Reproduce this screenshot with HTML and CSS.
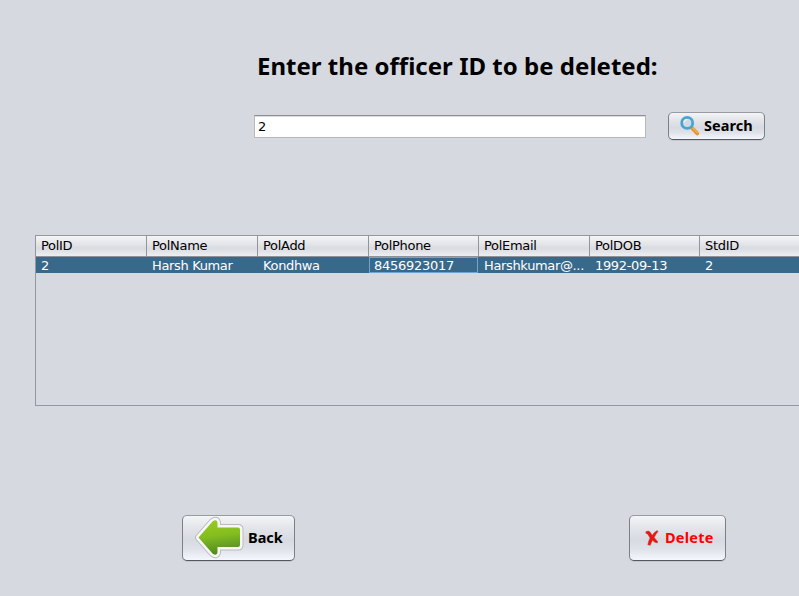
FILE: index.html
```
<!DOCTYPE html>
<html lang="en">
<head>
<meta charset="utf-8">
<title>Delete officer</title>
<link rel="stylesheet" href="styles.css">
</head>
<body>
<main class="panel">
  <h1 class="title">Enter the officer ID to be deleted:</h1>
  <form class="search">
    <input class="field" type="text" value="2" aria-label="Officer ID">
    <button class="btn btn-search" type="button">
      <svg width="20" height="20" viewBox="0 0 20 20">
        <path d="M12.300 12.300 17.300 17.500" stroke="#e3922f" stroke-width="3.800" stroke-linecap="round"/>
        <path d="M12.800 12 17.600 17" stroke="#f3b04f" stroke-width="1.300" stroke-linecap="round"/>
        <circle cx="7.200" cy="6.900" r="5.500" fill="#cfdae2" stroke="#48a5d2" stroke-width="2.800"/>
        <path d="M4 6.600A3.500 3.500 0 0 1 7.500 3.600" fill="none" stroke="#eef3f6" stroke-width="1.200"/>
      </svg>
      <span class="search-label">Search</span>
    </button>
  </form>
  <div class="grid">
    <div class="row head">
      <span>PolID</span><span>PolName</span><span>PolAdd</span><span>PolPhone</span><span>PolEmail</span><span>PolDOB</span><span>StdID</span>
    </div>
    <div class="row selected">
      <span>2</span><span>Harsh Kumar</span><span>Kondhwa</span><span class="focused">8456923017</span><span>Harshkumar@...</span><span>1992-09-13</span><span>2</span>
    </div>
  </div>
  <div class="actions">
    <button class="btn btn-back" type="button">
      <svg width="50" height="42" viewBox="0 0 50 42">
        <defs>
          <linearGradient id="leaf" x1="0" y1="0" x2="0.15" y2="1">
            <stop offset="0" stop-color="#98cd20"/><stop offset="0.5" stop-color="#84bd20"/><stop offset="1" stop-color="#528b25"/>
          </linearGradient>
          <path id="arrow" d="M4.500 20.500 18.500 4.500Q22.500 1.500 23.500 5.500V10.500H44Q46 10.500 46 12.500V28Q46 30 44 30H23.500V35.500Q22.500 39.500 18.500 36.500Z"/>
        </defs>
        <g stroke-linejoin="round">
          <use href="#arrow" fill="#b9bbbe" stroke="#b9bbbe" stroke-width="7"/>
          <use href="#arrow" fill="#f6f7f6" stroke="#f6f7f6" stroke-width="5"/>
          <use href="#arrow" fill="url(#leaf)"/>
        </g>
      </svg>
      <span class="back-label">Back</span>
    </button>
    <button class="btn btn-delete" type="button">
      <svg width="14" height="16" viewBox="0 0 14 16">
        <path d="M.8 1.800Q3.500 .2 5 2L7.300 5.300Q9 2 12.200 .6L13 1.600Q10.800 4 9.200 7.600L12.800 11.800 12.200 13Q9.700 12.700 7.600 10.300Q6 13 5.300 15.300L2.800 14.800Q3.200 11.500 5 8L2.800 4.300Q2.200 3.400 1 3.500Z" fill="#ee1410" stroke="#ae4440" stroke-width=".5"/>
      </svg>
      <span class="delete-label">Delete</span>
    </button>
  </div>
</main>
</body>
</html>
```
FILE: styles.css
```
* { box-sizing: border-box; }
body {
  margin: 0;
  background: #d6d9df;
  color: #000;
  font: 13px/16px "DejaVu Sans", sans-serif;
}
.panel { height: 596px; padding-top: 49px; overflow: hidden; }
.title {
  margin: 0 0 0 257px;
  height: 63px;
  font: bold 24px/34px "Noto Sans", sans-serif;
  letter-spacing: 0.02px;
  white-space: nowrap;
}
.search { display: flex; align-items: flex-start; margin-left: 254px; }
.field {
  width: 392px;
  height: 23px;
  margin: 3px 22px 0 0;
  padding: 0 3px;
  border: 1px solid #b6b8bd;
  border-top: 1px solid #8d8e93;
  box-shadow: inset 0 1px 0 #dcdde0;
  background: #fff;
  font: 13px "DejaVu Sans", sans-serif;
  outline: none;
}
.btn {
  display: flex;
  align-items: center;
  padding: 0;
  border: 1px solid #8b8e95;
  border-color: #989ba1 #7b7f86 #55585e;
  border-radius: 5px;
  background: linear-gradient(#f4f5f7 0%, #e4e6ea 25%, #d7dae0 55%, #dfe2e9 75%, #f4f7fe 100%);
  box-shadow: 0 1px 0 #c3c6cd;
  color: #000;
  font: bold 14.5px/20px "Noto Sans", sans-serif;
}
.btn svg { flex: none; overflow: visible; }
.btn span { padding-bottom: 2px; }
.btn-search { width: 97px; height: 28px; padding-left: 11px; gap: 4px; }
.search-label { letter-spacing: 0.05px; }
.grid {
  margin: 95px 0 0 35px;
  width: 784px;
  height: 171px;
  border: 1px solid #9297a1;
}
.row {
  display: grid;
  grid-template-columns: 111px 111px 111px 110px 111px 110px 119px;
}
.row span { padding-left: 5px; white-space: nowrap; overflow: hidden; }
.head {
  height: 21px;
  border-bottom: 1px solid #8e929b;
  background: linear-gradient(#f5f5f7, #dfe1e5 50%, #d8dbe0 60%, #eceef1);
  line-height: 20px;
  letter-spacing: -0.3px;
}
.head span { border-right: 1px solid #92959d; }
.selected { height: 16px; background: #39698a; color: #fff; line-height: 17px; letter-spacing: -0.35px; }
.row .focused { border: 1px solid #73a4d1; padding-left: 4px; line-height: 15px; margin-right: 1px; letter-spacing: -0.27px; }
.actions { display: flex; margin: 109px 0 0 182px; gap: 334px; }
.btn-back { width: 113px; height: 46px; padding-left: 11px; gap: 4px; }
.back-label { letter-spacing: 0; }
.btn-delete { width: 97px; height: 46px; padding-left: 15px; gap: 6px; color: #f00; }
.delete-label { letter-spacing: 0.25px; }
```
